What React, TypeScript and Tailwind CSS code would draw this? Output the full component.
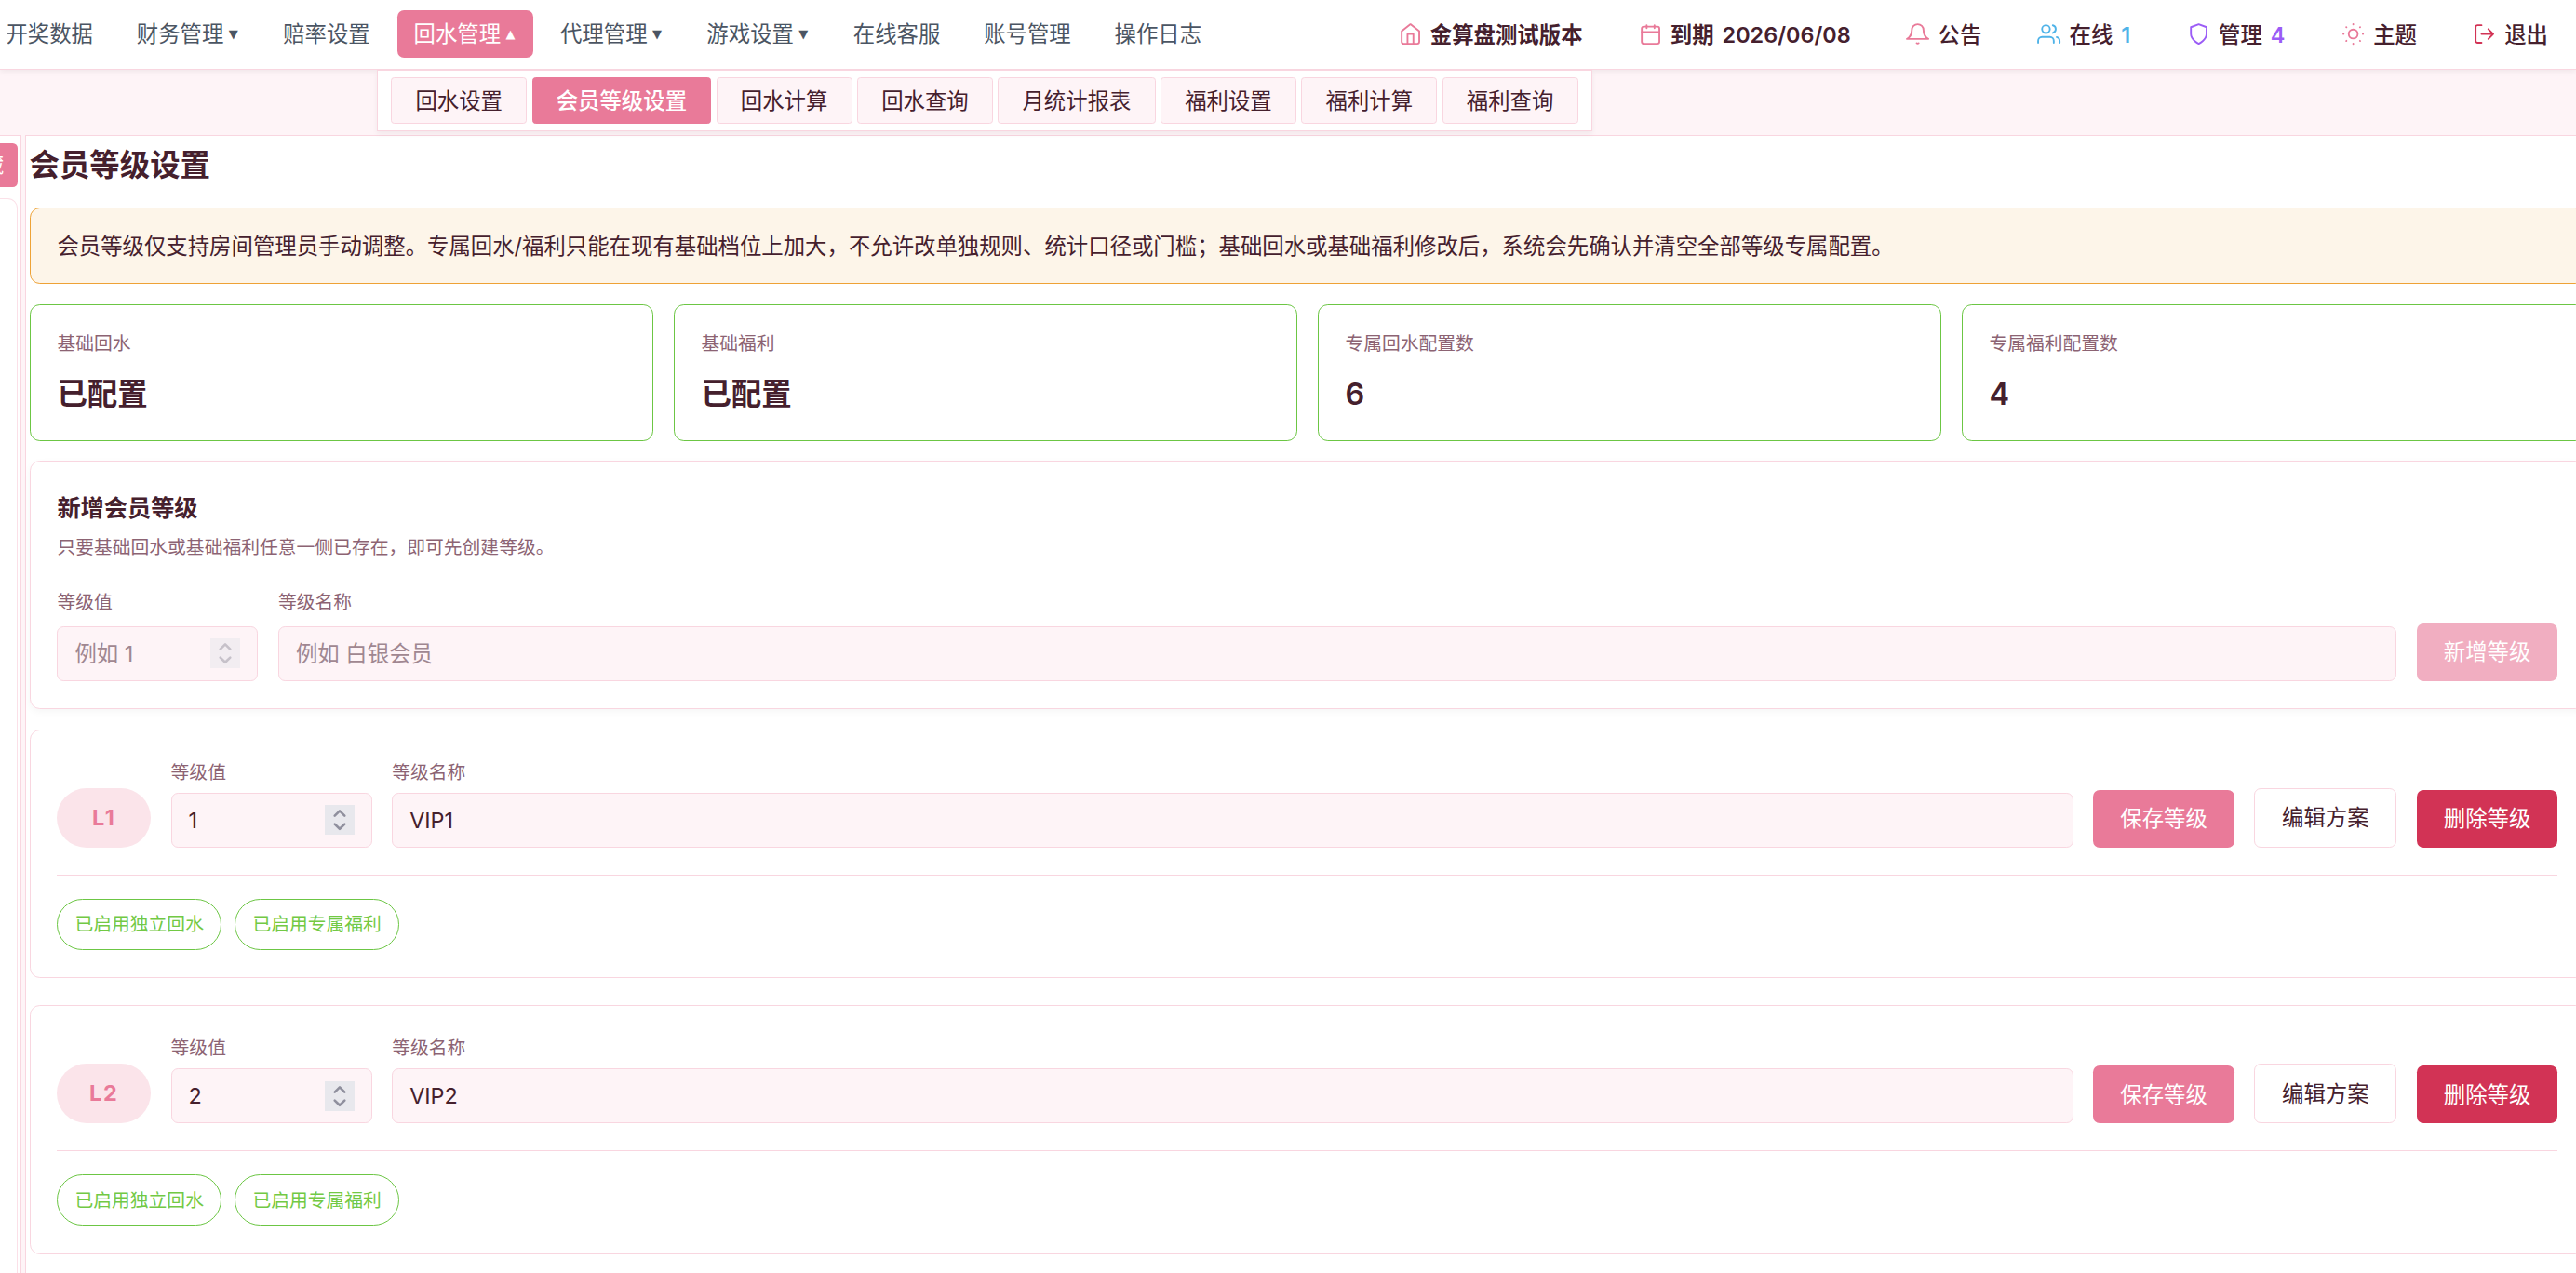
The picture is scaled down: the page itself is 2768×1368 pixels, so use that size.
import React from 'react';

interface NavItem {
  key: string;
  label: string;
  arrow?: boolean;
}

interface MemberLevel {
  level: number;
  name: string;
  tags: string[];
}

const navItems: NavItem[] = [
  { key: 'draw', label: '开奖数据' },
  { key: 'finance', label: '财务管理', arrow: true },
  { key: 'odds', label: '赔率设置' },
  { key: 'rebate', label: '回水管理', arrow: true },
  { key: 'agent', label: '代理管理', arrow: true },
  { key: 'game', label: '游戏设置', arrow: true },
  { key: 'service', label: '在线客服' },
  { key: 'account', label: '账号管理' },
  { key: 'logs', label: '操作日志' },
];

const subNavItems = [
  '回水设置',
  '会员等级设置',
  '回水计算',
  '回水查询',
  '月统计报表',
  '福利设置',
  '福利计算',
  '福利查询',
];

const stats = [
  { label: '基础回水', value: '已配置' },
  { label: '基础福利', value: '已配置' },
  { label: '专属回水配置数', value: '6' },
  { label: '专属福利配置数', value: '4' },
];

const levels: MemberLevel[] = [
  { level: 1, name: 'VIP1', tags: ['已启用独立回水', '已启用专属福利'] },
  { level: 2, name: 'VIP2', tags: ['已启用独立回水', '已启用专属福利'] },
];

const icons: Record<string, React.ReactNode> = {
  home: (
    <>
      <path d="M3 9l9-7 9 7v11a2 2 0 0 1-2 2H5a2 2 0 0 1-2-2z" />
      <path d="M9 22V12h6v10" />
    </>
  ),
  calendar: (
    <>
      <rect x="3" y="4.4" width="18" height="17.6" rx="2" />
      <path d="M8 3v3M16 3v3M3 10h18" />
    </>
  ),
  bell: (
    <>
      <path d="M18 8A6 6 0 0 0 6 8c0 7-5 9-5 9h22s-5-2-5-9" />
      <path d="M11 21.4a1.4 1.4 0 0 0 2 0" />
    </>
  ),
  users: (
    <>
      <path d="M17 21v-2a4 4 0 0 0-4-4H5a4 4 0 0 0-4 4v2" />
      <circle cx="9" cy="7" r="4" />
      <path d="M23 21v-2a4 4 0 0 0-3-3.87M16 3.13a4 4 0 0 1 0 7.75" />
    </>
  ),
  shield: <path d="M12 22s8-4 8-10V5l-8-3-8 3v7c0 6 8 10 8 10z" />,
  sun: (
    <>
      <circle cx="12" cy="12" r="4.6" />
      <path d="M12 1.9v.3M12 21.8v.3M1.9 12h.3M21.8 12h.3M4.9 4.9l.2.2M18.9 18.9l.2.2M4.9 19.1l.2-.2M18.9 5.1l.2-.2" />
    </>
  ),
  logout: (
    <>
      <path d="M9 21H5a2 2 0 0 1-2-2V5a2 2 0 0 1 2-2h4" />
      <path d="M16 17l5-5-5-5M21 12H9" />
    </>
  ),
};

const Icon: React.FC<{ name: string; className?: string }> = ({ name, className = '' }) => (
  <svg
    viewBox="0 0 24 24"
    fill="none"
    stroke="currentColor"
    strokeWidth="1.8"
    strokeLinecap="round"
    strokeLinejoin="round"
    className={`w-[25.2px] h-[25.2px] shrink-0 ${className}`}
  >
    {icons[name]}
  </svg>
);

const Spinner: React.FC<{ dim?: boolean }> = ({ dim }) => (
  <svg viewBox="0 0 32 32" className={`w-8 h-8 shrink-0 ${dim ? 'opacity-50' : ''}`}>
    <rect width="32" height="32" fill="#e8e8ed" />
    <path
      d="M10.7 11.6 16 6.4l5.3 5.2M10.7 20.6 16 25.8l5.3-5.2"
      fill="none"
      stroke="#8f8f9d"
      strokeWidth="2.6"
      strokeLinecap="round"
      strokeLinejoin="round"
    />
  </svg>
);

interface FieldProps {
  label: string;
  value: string;
  placeholder?: boolean;
  number?: boolean;
  labelClass?: string;
}

const Field: React.FC<FieldProps> = ({ label, value, placeholder, number, labelClass = 'mb-[6.2px]' }) => (
  <div className={number ? 'w-[216px] shrink-0' : 'flex-1 min-w-0'}>
    <div className={`text-[19.8px] leading-[32px] text-[#8c6373] ${labelClass}`}>{label}</div>
    <div className="h-[59px] flex items-center justify-between px-[18px] rounded-[7.2px] border border-[#f9d6e0] bg-[#fef4f7]">
      <span className={placeholder ? 'pt-px text-[#a08791]' : 'text-[#45202d]'}>{value}</span>
      {number && <Spinner dim={placeholder} />}
    </div>
  </div>
);

const App: React.FC = () => {
  const activeNav = 'rebate';
  const activeSub = '会员等级设置';

  return (
    <div className="w-full h-[1368px] overflow-hidden bg-[#fef4f7] text-[#45202d] text-[23.4px] leading-[35px] whitespace-nowrap font-[Inter,'Noto_Sans_CJK_SC',sans-serif]">
      {/* Top bar */}
      <header className="relative z-10 h-[75px] flex items-center bg-white border-b border-[#f9d6e0] shadow-[0_2px_6px_rgba(0,0,0,0.06)]">
        <nav className="flex gap-[10.8px] -ml-[11.6px] -mt-px">
          {navItems.map((item) => (
            <div
              key={item.key}
              className={`h-[51px] flex items-center rounded-[7.2px] pl-[18px] ${
                item.arrow ? 'w-[146.6px]' : 'w-[129.6px]'
              } ${item.key === activeNav ? 'bg-[#e97a99] text-white' : 'text-[#4b5563]'}`}
            >
              <span>{item.label}</span>
              {item.arrow && (
                <span className="ml-[5.4px] text-[13px] leading-none font-['DejaVu_Sans']">
                  {item.key === activeNav ? '▲' : '▼'}
                </span>
              )}
            </div>
          ))}
        </nav>

        <div className="ml-auto pr-[30px] flex gap-[60.1px] font-medium">
          <div className="flex items-center gap-[9px] font-semibold">
            <Icon name="home" className="text-[#e97a99]" />
            <span>金算盘测试版本</span>
          </div>
          <div className="w-[227.6px] flex items-center gap-[9px] font-semibold">
            <Icon name="calendar" className="text-[#e97a99]" />
            <span>到期</span>
            <span>2026/06/08</span>
          </div>
          <div className="flex items-center gap-[9px]">
            <Icon name="bell" className="text-[#e97a99]" />
            <span>公告</span>
          </div>
          <div className="w-[100.4px] flex items-center gap-[9px]">
            <Icon name="users" className="text-[#4fb3e8]" />
            <span>在线</span>
            <span className="text-[#4fb3e8] font-semibold">1</span>
          </div>
          <div className="w-[106px] flex items-center gap-[9px]">
            <Icon name="shield" className="text-[#9b5cf6]" />
            <span>管理</span>
            <span className="text-[#9b5cf6] font-semibold">4</span>
          </div>
          <div className="flex items-center gap-[9px]">
            <Icon name="sun" className="text-[#e97a99]" />
            <span>主题</span>
          </div>
          <div className="flex items-center gap-[9px]">
            <Icon name="logout" className="text-[#d23355]" />
            <span>退出</span>
          </div>
        </div>
      </header>

      {/* Sub menu */}
      <div className="relative h-[70px] pl-[405px] flex items-start">
        <div className="relative z-20 h-[66px] flex items-start gap-[5.4px] px-[14.2px] pt-[7px] bg-white border border-[#f9d6e0] shadow-[0_3px_6px_rgba(0,0,0,0.05)]">
          {subNavItems.map((label) => (
            <div
              key={label}
              className={`h-[50px] flex items-center px-[25.2px] rounded-[3.6px] border ${
                label === activeSub
                  ? 'bg-[#e97a99] border-[#e97a99] text-white font-medium'
                  : 'bg-[#fef4f7] border-[#f9d6e0]'
              }`}
            >
              {label}
            </div>
          ))}
        </div>
      </div>

      <div className="h-[1223px] flex gap-[4px]">
        {/* Collapsed sidebar */}
        <aside className="w-[23px] shrink-0 flex flex-col bg-white border-t border-r border-[#f9d6e0] pt-2 pr-[3px] overflow-hidden">
          <div className="h-[47px] shrink-0 flex items-center justify-end pr-[15px] rounded-r-[5.4px] bg-[#e97a99] text-white text-[21.6px]">
            藏
          </div>
          <div className="mt-3 flex-1 rounded-tr-[10.8px] border-t border-r border-[#fbe0e8]" />
        </aside>

        {/* Main content */}
        <main className="w-[2760px] shrink-0 bg-white border-t border-l border-[#f9d6e0] pl-[3.6px]">
          <div className="w-[2746.4px]">
            <h1 className="h-[77px] pt-[7px] text-[32.4px] leading-[49px] font-semibold">会员等级设置</h1>

            <div className="h-[82px] flex items-center px-[28.8px] rounded-[10.8px] border border-[#eea236] bg-[#fdf5e9]">
              会员等级仅支持房间管理员手动调整。专属回水/福利只能在现有基础档位上加大，不允许改单独规则、统计口径或门槛；基础回水或基础福利修改后，系统会先确认并清空全部等级专属配置。
            </div>

            <div className="mt-[22px] grid grid-cols-4 gap-[21.6px]">
              {stats.map((stat) => (
                <div
                  key={stat.label}
                  className="h-[147px] px-[28.8px] pt-[26px] rounded-[10.8px] border border-[#6cc644]"
                >
                  <div className="text-[19.8px] leading-[30px] text-[#8c6373]">{stat.label}</div>
                  <div className="mt-[15px] text-[32.4px] leading-[49px] font-semibold">{stat.value}</div>
                </div>
              ))}
            </div>

            {/* Create form */}
            <section className="mt-[21px] h-[267px] px-[28.8px] pt-[31px] rounded-[10.8px] border border-[#f9d6e0] shadow-[0_3px_8px_rgba(0,0,0,0.04)]">
              <h2 className="text-[25.2px] leading-[38px] font-semibold">新增会员等级</h2>
              <p className="mt-[8px] text-[19.8px] leading-[30px] text-[#8c6373]">
                只要基础回水或基础福利任意一侧已存在，即可先创建等级。
              </p>
              <div className="mt-[28px] flex items-end gap-[21.6px]">
                <Field label="等级值" value="例如 1" placeholder number labelClass="mb-[9.7px]" />
                <Field label="等级名称" value="例如 白银会员" placeholder labelClass="mb-[9.7px]" />
                <div className="w-[151.2px] h-[62px] flex items-center justify-center rounded-[7.2px] bg-[#e97a99] text-white opacity-60">
                  新增等级
                </div>
              </div>
            </section>

            {/* Level list */}
            <div className="mt-[22px] flex flex-col gap-[28.8px]">
              {levels.map((item) => (
                <section
                  key={item.level}
                  className="h-[267.4px] px-[28.8px] pt-[28.8px] rounded-[10.8px] border border-[#f9d6e0]"
                >
                  <div className="flex items-end gap-[21.6px] pb-[28.8px] border-b border-[#f9d6e0]">
                    <div className="w-[100.6px] h-[64.4px] flex items-center justify-center rounded-full bg-[#fbe4ea] text-[#e97a99] font-bold tracking-[1.6px]">
                      L{item.level}
                    </div>
                    <Field label="等级值" value={String(item.level)} number />
                    <Field label="等级名称" value={item.name} />
                    <div className="w-[151.2px] h-[62px] flex items-center justify-center rounded-[7.2px] bg-[#e97a99] text-white">
                      保存等级
                    </div>
                    <div className="w-[153.2px] h-[64px] flex items-center justify-center rounded-[7.2px] border border-[#f9d6e0] bg-white">
                      编辑方案
                    </div>
                    <div className="w-[151.2px] h-[62px] flex items-center justify-center rounded-[7.2px] bg-[#d23355] text-white">
                      删除等级
                    </div>
                  </div>
                  <div className="mt-[25.2px] flex gap-[14.4px]">
                    {item.tags.map((tag) => (
                      <span
                        key={tag}
                        className="w-[176.6px] h-[55px] pt-px flex items-center justify-center rounded-full border border-[#6cc644] text-[#72c944] text-[19.8px]"
                      >
                        {tag}
                      </span>
                    ))}
                  </div>
                </section>
              ))}
            </div>
          </div>
        </main>
      </div>
    </div>
  );
};

export default App;
